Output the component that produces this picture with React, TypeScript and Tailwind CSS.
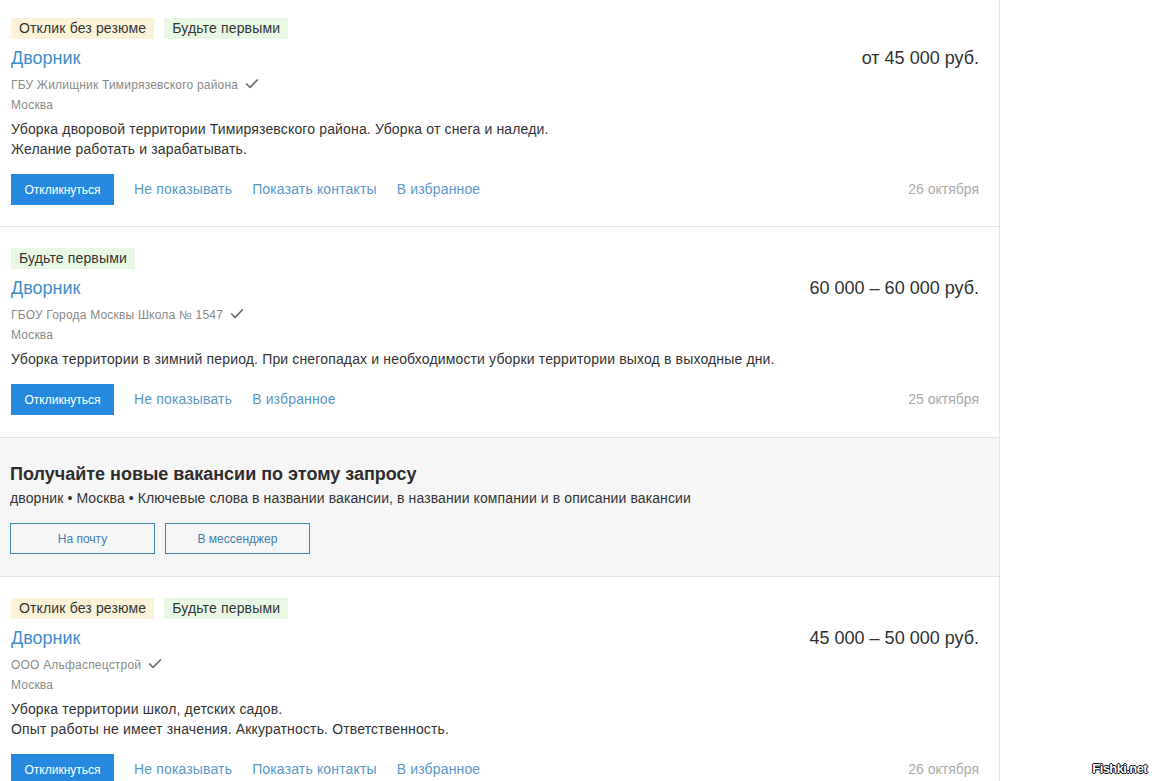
import { Check } from "lucide-react";

type Vacancy = {
  tags: string[];
  salary: string;
  company: string;
  desc: string[];
  contacts: boolean;
  date: string;
  pad: string;
};

const vacancies: Vacancy[] = [
  {
    tags: ["Отклик без резюме", "Будьте первыми"],
    salary: "от 45 000 руб.",
    company: "ГБУ Жилищник Тимирязевского района",
    desc: [
      "Уборка дворовой территории Тимирязевского района. Уборка от снега и наледи.",
      "Желание работать и зарабатывать.",
    ],
    contacts: true,
    date: "26 октября",
    pad: "pt-[18px] pb-[21px]",
  },
  {
    tags: ["Будьте первыми"],
    salary: "60 000 – 60 000 руб.",
    company: "ГБОУ Города Москвы Школа № 1547",
    desc: [
      "Уборка территории в зимний период. При снегопадах и необходимости уборки территории выход в выходные дни.",
    ],
    contacts: false,
    date: "25 октября",
    pad: "pt-[21px] pb-[22px]",
  },
];

const third: Vacancy = {
  tags: ["Отклик без резюме", "Будьте первыми"],
  salary: "45 000 – 50 000 руб.",
  company: "ООО Альфаспецстрой",
  desc: [
    "Уборка территории школ, детских садов.",
    "Опыт работы не имеет значения. Аккуратность. Ответственность.",
  ],
  contacts: true,
  date: "26 октября",
  pad: "pt-[21px] pb-[21px]",
};

const Tag = ({ label }: { label: string }) => (
  <span
    className={
      label === "Будьте первыми"
        ? "h-[21px] px-2 flex items-center text-[14px] tracking-[0.15px] text-[#333] bg-[#e9f8e5]"
        : "h-[21px] px-2 flex items-center text-[14px] tracking-[0.15px] text-[#333] bg-[#fbf3d8]"
    }
  >
    {label}
  </span>
);

const VacancyCard = ({ v }: { v: Vacancy }) => (
  <div className={`${v.pad} pl-[11px] pr-5 border-b border-[#e3e3e3]`}>
    <div className="flex gap-[10px]">
      {v.tags.map((t) => (
        <Tag key={t} label={t} />
      ))}
    </div>
    <div className="flex justify-between items-center mt-2 h-[22px]">
      <span className="text-[18px] text-[#3f8dcb]">Дворник</span>
      <span className="text-[18px] text-[#303030]">{v.salary}</span>
    </div>
    <div className="flex items-center gap-[6px] mt-[6px] h-[20px] text-[12px] tracking-[0.2px] text-[#8a8a8a]">
      {v.company}
      <Check size={16} strokeWidth={2.6} className="text-[#6e6e6e] -mt-[2px]" />
    </div>
    <div className="h-[20px] flex items-center text-[12px] tracking-[0.2px] text-[#8a8a8a]">Москва</div>
    <div className="mt-[4px] text-[14px] leading-[20px] tracking-[0.15px] text-[#333]">
      {v.desc.map((d) => (
        <div key={d}>{d}</div>
      ))}
    </div>
    <div className="flex items-center mt-[15px]">
      <button className="h-[31px] w-[103px] bg-[#2689e0] text-white text-[12px]">
        Откликнуться
      </button>
      <div className="flex gap-5 ml-5 text-[14px] tracking-[0.15px] text-[#5a98c8]">
        <span>Не показывать</span>
        {v.contacts && <span>Показать контакты</span>}
        <span>В избранное</span>
      </div>
      <span className="ml-auto text-[14px] text-[#ababab]">{v.date}</span>
    </div>
  </div>
);

export default function App() {
  return (
    <div
      className="relative w-[1152px] h-[781px] overflow-hidden bg-white"
      style={{ fontFamily: '"Liberation Sans", Arial, sans-serif' }}
    >
      <div className="w-[1000px] h-full border-r border-[#e3e3e3]">
        {vacancies.map((v) => (
          <VacancyCard key={v.salary} v={v} />
        ))}

        <div className="bg-[#f6f6f6] pt-[25px] pb-[22px] pl-[10px] pr-5 border-b border-[#e3e3e3]">
          <div className="text-[18px] leading-[22px] font-bold text-[#2d2d2d]">
            Получайте новые вакансии по этому запросу
          </div>
          <div className="mt-[3px] text-[14px] leading-[20px] tracking-[0.1px] text-[#333]">
            дворник • Москва • Ключевые слова в названии вакансии, в названии компании и в описании вакансии
          </div>
          <div className="flex gap-[10px] mt-[15px]">
            <button className="h-[31px] w-[145px] border border-[#3f88a8] text-[12px] text-[#3f7fb0] bg-transparent">
              На почту
            </button>
            <button className="h-[31px] w-[145px] border border-[#3f88a8] text-[12px] text-[#3f7fb0] bg-transparent">
              В мессенджер
            </button>
          </div>
        </div>

        <VacancyCard v={third} />
      </div>

      <span
        className="absolute right-[5px] bottom-[3px] text-[13px] font-bold text-white tracking-[-0.6px]"
        style={{ textShadow: "1px 0 #000, -1px 0 #000, 0 1px #000, 0 -1px #000" }}
      >
        Fishki.net
      </span>
    </div>
  );
}
